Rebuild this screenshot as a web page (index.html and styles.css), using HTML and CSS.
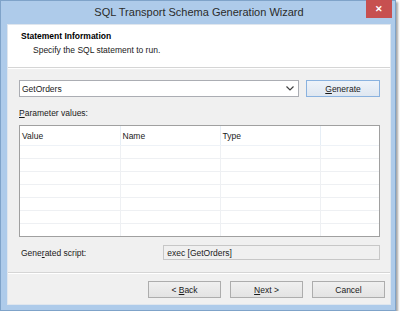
FILE: index.html
```html
<!DOCTYPE html>
<html lang="en">
<head>
  <meta charset="UTF-8">
  <title>SQL Transport Schema Generation Wizard</title>
  <link rel="stylesheet" href="styles.css">
</head>
<body>
  <div class="window">
    <div class="titlebar">
      <span></span>
      <span class="title">SQL Transport Schema Generation Wizard</span>
      <span class="close">&#x2715;</span>
    </div>
    <div class="client">
      <div class="header">
        <div class="header-title">Statement Information</div>
        <div class="header-sub">Specify the SQL statement to run.</div>
      </div>

      <div class="content">
        <div class="row-top">
          <div class="combo">
            <span>GetOrders</span>
            <svg width="8" height="5" viewBox="0 0 8 5"><path d="M0.5 0.5 L4 4 L7.5 0.5" fill="none" stroke="#404040" stroke-width="1.2"/></svg>
          </div>
          <button class="btn btn-default"><u>G</u>enerate</button>
        </div>

        <div class="label"><u>P</u>arameter values:</div>

        <div class="grid-wrap">
          <table class="grid">
            <colgroup>
              <col class="col-fixed">
              <col class="col-fixed">
              <col class="col-fixed">
              <col>
            </colgroup>
            <thead>
              <tr><th>Value</th><th>Name</th><th>Type</th><th></th></tr>
            </thead>
            <tbody>
              <tr><td></td><td></td><td></td><td></td></tr>
              <tr><td></td><td></td><td></td><td></td></tr>
              <tr><td></td><td></td><td></td><td></td></tr>
              <tr><td></td><td></td><td></td><td></td></tr>
              <tr><td></td><td></td><td></td><td></td></tr>
              <tr><td></td><td></td><td></td><td></td></tr>
              <tr><td></td><td></td><td></td><td></td></tr>
            </tbody>
          </table>
        </div>

        <div class="script-row">
          <span class="label">Gene<u>r</u>ated script:</span>
          <div class="script-box">exec [GetOrders]</div>
        </div>
      </div>

      <div class="footer">
        <button class="btn">&lt; <u>B</u>ack</button>
        <button class="btn"><u>N</u>ext &gt;</button>
        <button class="btn">Cancel</button>
      </div>
    </div>
  </div>
</body>
</html>
```

FILE: styles.css
```css
body {
  margin: 0;
  background: #ffffff;
  font-family: 'Liberation Sans', Arial, sans-serif;
  font-size: 8.5px;
  color: #1a1a1a;
}
.window {
  width: 396px;
  height: 311px;
  box-sizing: border-box;
  background: #aecbea;
  border: 1px solid #7fa3c9;
  box-shadow: 2px 2px 2px rgba(0, 0, 0, 0.35);
  padding: 0 4px 5px 6px;
  display: flex;
  flex-direction: column;
}
.titlebar {
  height: 23px;
  display: grid;
  grid-template-columns: 1fr auto 1fr;
  align-items: start;
}
.title {
  font-size: 11px;
  color: #2b2b2b;
  padding-top: 5px;
}
.close {
  justify-self: end;
  width: 26px;
  height: 18px;
  margin-top: -1px;
  margin-right: -1px;
  background: #c75050;
  color: #ffffff;
  font-size: 9px;
  font-weight: bold;
  display: flex;
  align-items: center;
  justify-content: center;
}
.client {
  flex: 1;
  background: #f0f0f0;
  border: 1px solid #dfe6ee;
  display: flex;
  flex-direction: column;
}
.header {
  background: #ffffff;
  height: 43px;
  border-bottom: 1px solid #d5d5d5;
  box-shadow: 0 1px 0 #ffffff;
  padding: 5px 0 0 13px;
  box-sizing: border-box;
}
.header-title {
  font-weight: bold;
  color: #000000;
  line-height: 12px;
}
.header-sub {
  padding-left: 12px;
  line-height: 12px;
  margin-top: 2px;
}
.content {
  flex: 1;
  padding: 12px 10px 0 11px;
}
.row-top {
  display: flex;
  gap: 7px;
  height: 17px;
}
.combo {
  width: 280px;
  box-sizing: border-box;
  background: #ffffff;
  border: 1px solid #abadb3;
  display: flex;
  align-items: center;
  justify-content: space-between;
  padding: 0 4px 0 2px;
}
.btn {
  font-family: inherit;
  font-size: 8.5px;
  color: #1a1a1a;
  width: 74px;
  height: 17px;
  padding: 0;
  border: 1px solid #adadad;
  background: linear-gradient(#f0f0f0, #e3e3e3);
}
.btn-default {
  border-color: #8ab2df;
  background: linear-gradient(#eef3f9, #dfe7f1);
}
.label {
  color: #1a1a1a;
}
.content > .label {
  margin-top: 10px;
  line-height: 12px;
}
.grid-wrap {
  margin-top: 6px;
  width: 361px;
  height: 112px;
  box-sizing: border-box;
  border: 1px solid #a0a0a0;
  background: #ffffff;
  overflow: hidden;
}
.grid {
  border-collapse: collapse;
  table-layout: fixed;
  width: 100%;
}
.grid .col-fixed {
  width: 100px;
}
.grid th {
  font-weight: normal;
  text-align: left;
  height: 19px;
  padding: 0 0 0 2px;
  border-right: 1px solid #e6eef6;
  border-bottom: 1px solid #eef2f7;
  color: #1a1a1a;
}
.grid th:last-child,
.grid td:last-child { border-right: none; }
.grid td {
  height: 12px;
  padding: 0;
  border-right: 1px solid #eef0f3;
  border-bottom: 1px solid #eef0f3;
}
.script-row {
  display: flex;
  align-items: center;
  margin-top: 8px;
}
.script-row .label {
  width: 143px;
  padding-left: 2px;
}
.script-box {
  width: 218px;
  height: 15px;
  box-sizing: border-box;
  border: 1px solid #c7c7c7;
  background: #f0f0f0;
  padding-left: 3px;
  display: flex;
  align-items: center;
}
.footer {
  height: 32px;
  border-top: 1px solid #d5d5d5;
  box-shadow: inset 0 1px 0 #ffffff;
  display: flex;
  justify-content: flex-end;
  align-items: flex-start;
  gap: 9px;
  padding: 8px 5px 0 0;
  box-sizing: border-box;
}
.footer .btn {
  width: 73px;
}
```
